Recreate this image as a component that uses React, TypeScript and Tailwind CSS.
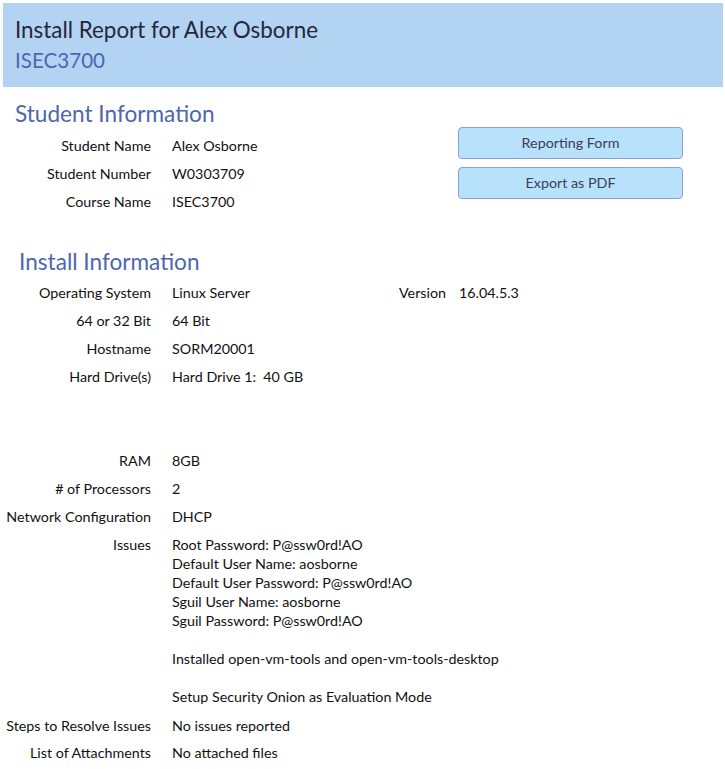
import React from "react";

const font = { fontFamily: "Lato, 'Open Sans', sans-serif" };

function Row({ label, children, h = "h-[28px]" }: { label: string; children: React.ReactNode; h?: string }) {
  return (
    <div className={`flex items-start ${h}`}>
      <div className="w-[151px] shrink-0 text-right text-[14.3px] leading-[19px] text-[#111]">{label}</div>
      <div className="ml-[21px] text-[14.3px] leading-[19px] text-[#111]">{children}</div>
    </div>
  );
}

export default function App() {
  return (
    <div className="w-[725px] h-[769px] bg-white overflow-hidden" style={font}>
      <div className="pt-[3px] pl-[3px] pr-[2px]">
        <div className="h-[84px] bg-[#b3d3f2] pl-[12px] pt-[13px]">
          <div className="text-[22.4px] leading-[28px] text-[#26263c]">Install Report for Alex Osborne</div>
          <div className="text-[20.6px] leading-[28px] mt-[2px] text-[#4d66ad]">ISEC3700</div>
        </div>
      </div>

      <div className="flex">
        <div className="w-[440px]">
          <div className="pl-[15px] pt-[13px] text-[22.6px] leading-[28px] text-[#4d66ad]">Student Information</div>
          <div className="pt-[8px]">
            <Row label="Student Name">Alex Osborne</Row>
            <Row label="Student Number">W0303709</Row>
            <Row label="Course Name">ISEC3700</Row>
          </div>
        </div>
        <div className="ml-[18px] pt-[40px] flex flex-col gap-[8px]">
          <button className="w-[225px] h-[32px] rounded-[4px] border border-[#8f9fd2] bg-[#b8e2fc] text-[14.3px] text-[#3c3c54]">Reporting Form</button>
          <button className="w-[225px] h-[32px] rounded-[4px] border border-[#8f9fd2] bg-[#b8e2fc] text-[14.3px] text-[#3c3c54]">Export as PDF</button>
        </div>
      </div>

      <div className="pl-[19px] pt-[28px] text-[22.6px] leading-[28px] text-[#4d66ad]">Install Information</div>
      <div className="pt-[7px]">
        <div className="flex items-start h-[28px]">
          <div className="w-[151px] shrink-0 text-right text-[14.3px] leading-[19px] text-[#111]">Operating System</div>
          <div className="ml-[21px] w-[227px] text-[14.3px] leading-[19px] text-[#111]">Linux Server</div>
          <div className="w-[47px] text-right text-[14.3px] leading-[19px] text-[#111]">Version</div>
          <div className="ml-[13px] text-[14.3px] leading-[19px] text-[#111]">16.04.5.3</div>
        </div>
        <Row label="64 or 32 Bit">64 Bit</Row>
        <Row label="Hostname">SORM20001</Row>
        <Row label="Hard Drive(s)">Hard Drive 1:&nbsp; 40 GB</Row>
      </div>

      <div className="pt-[56px]">
        <Row label="RAM">8GB</Row>
        <Row label="# of Processors">2</Row>
        <Row label="Network Configuration">DHCP</Row>
        <Row label="Issues" h="h-[181px]">
          <div>Root Password: P@ssw0rd!AO</div>
          <div>Default User Name: aosborne</div>
          <div>Default User Password: P@ssw0rd!AO</div>
          <div>Sguil User Name: aosborne</div>
          <div>Sguil Password: P@ssw0rd!AO</div>
          <div className="h-[19px]"></div>
          <div>Installed open-vm-tools and open-vm-tools-desktop</div>
          <div className="h-[19px]"></div>
          <div>Setup Security Onion as Evaluation Mode</div>
        </Row>
        <Row label="Steps to Resolve Issues" h="h-[27px]">No issues reported</Row>
        <Row label="List of Attachments">No attached files</Row>
      </div>
    </div>
  );
}
